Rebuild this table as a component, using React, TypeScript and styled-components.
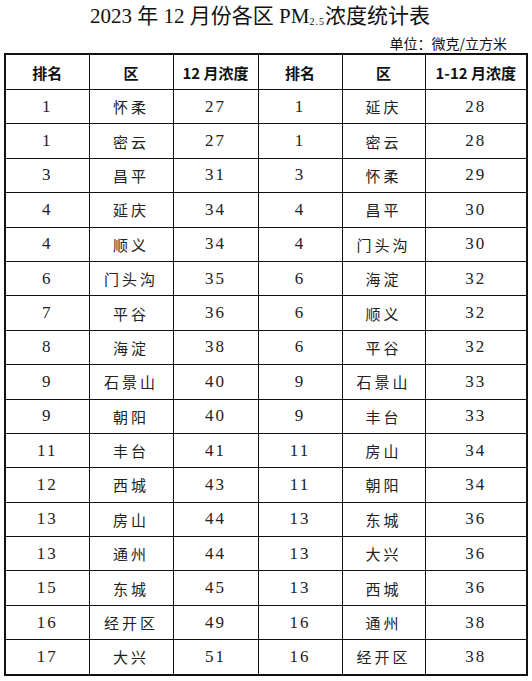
import { FC } from 'react';
import styled, { createGlobalStyle } from 'styled-components';

type Row = [string, string, string];

const monthRows: Row[] = [
	['1', '怀柔', '27'],
	['1', '密云', '27'],
	['3', '昌平', '31'],
	['4', '延庆', '34'],
	['4', '顺义', '34'],
	['6', '门头沟', '35'],
	['7', '平谷', '36'],
	['8', '海淀', '38'],
	['9', '石景山', '40'],
	['9', '朝阳', '40'],
	['11', '丰台', '41'],
	['12', '西城', '43'],
	['13', '房山', '44'],
	['13', '通州', '44'],
	['15', '东城', '45'],
	['16', '经开区', '49'],
	['17', '大兴', '51'],
];

const yearRows: Row[] = [
	['1', '延庆', '28'],
	['1', '密云', '28'],
	['3', '怀柔', '29'],
	['4', '昌平', '30'],
	['4', '门头沟', '30'],
	['6', '海淀', '32'],
	['6', '顺义', '32'],
	['6', '平谷', '32'],
	['9', '石景山', '33'],
	['9', '丰台', '33'],
	['11', '房山', '34'],
	['11', '朝阳', '34'],
	['13', '东城', '36'],
	['13', '大兴', '36'],
	['13', '西城', '36'],
	['16', '通州', '38'],
	['16', '经开区', '38'],
];

// column widths, left to right
const COLS = [84, 84, 85, 84, 83, 102];

const GlobalStyle = createGlobalStyle`
	body {
		margin: 0;
		background: #fff;
		font-family: 'Liberation Serif', 'Noto Sans CJK SC', serif;
		color: #111;
	}
`;

const Page = styled.div`
	width: 532px;
	height: 681px;
	overflow: hidden;
`;

const Title = styled.h1`
	margin: 0;
	height: 31px;
	padding-top: 3px;
	box-sizing: border-box;
	padding-right: 12px;
	text-align: center;
	font-size: 21px;
	font-weight: normal;
	line-height: 26px;
	color: #111;
	sub {
		font-size: 10px;
		vertical-align: -2px;
		line-height: 0;
		letter-spacing: 1px;
	}
`;

const Unit = styled.div`
	height: 22px;
	padding-right: 25px;
	text-align: right;
	font-family: 'Noto Sans CJK SC', sans-serif;
	font-size: 14px;
	line-height: 24px;
	color: #111;
`;

const Table = styled.table`
	margin-left: 4px;
	width: 522px;
	table-layout: fixed;
	border-collapse: collapse;
	border: 2px solid #111;
`;

const HeadCell = styled.th`
	height: 34px;
	padding: 0;
	border: 1px solid #111;
	font-family: 'Noto Sans CJK SC', sans-serif;
	font-size: 15px;
	font-weight: bold;
	color: #111;
	text-align: center;
`;

const Cell = styled.td<{ $cjk?: boolean }>`
	height: 33.4px;
	padding: 0;
	border: 1px solid #111;
	text-align: center;
	font-family: ${(p) =>
		p.$cjk ? "'Noto Sans CJK SC', sans-serif" : "'Liberation Serif', serif"};
	font-size: ${(p) => (p.$cjk ? '15px' : '17px')};
	letter-spacing: ${(p) => (p.$cjk ? '3px' : '2px')};
	color: #222;
`;

const headers = ['排名', '区', '12 月浓度', '排名', '区', '1-12 月浓度'];

const App: FC = () => (
	<>
		<GlobalStyle />
		<Page>
			<Title>
				2023 年 12 月份各区 PM<sub>2.5</sub>浓度统计表
			</Title>
			<Unit>单位：微克/立方米</Unit>
			<Table>
				<colgroup>
					{COLS.map((w, i) => (
						<col key={i} style={{ width: w }} />
					))}
				</colgroup>
				<thead>
					<tr>
						{headers.map((h, i) => (
							<HeadCell key={i}>{h}</HeadCell>
						))}
					</tr>
				</thead>
				<tbody>
					{monthRows.map((left, i) => {
						const right = yearRows[i];
						return (
							<tr key={i}>
								<Cell>{left[0]}</Cell>
								<Cell $cjk>{left[1]}</Cell>
								<Cell>{left[2]}</Cell>
								<Cell>{right[0]}</Cell>
								<Cell $cjk>{right[1]}</Cell>
								<Cell>{right[2]}</Cell>
							</tr>
						);
					})}
				</tbody>
			</Table>
		</Page>
	</>
);

export default App;
